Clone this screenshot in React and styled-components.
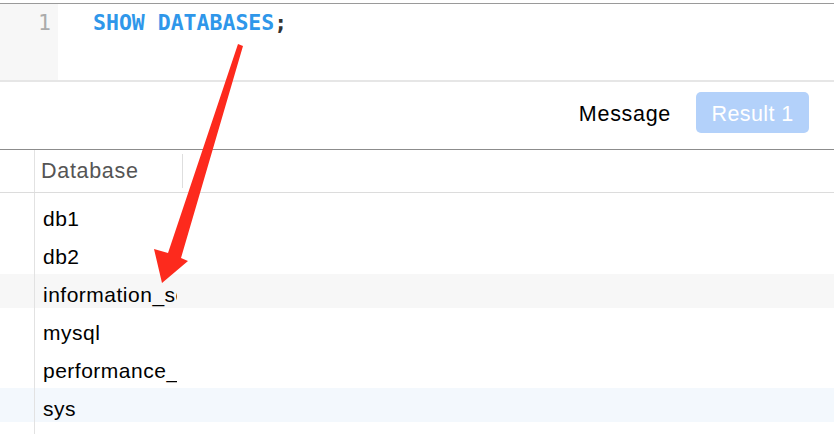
import React from "react";
import styled, { createGlobalStyle } from "styled-components";

const Global = createGlobalStyle`
  html, body { margin: 0; padding: 0; background: #fff; }
  body { font-family: "Liberation Sans", Arial, sans-serif; }
`;

const Frame = styled.div`
  position: relative;
  width: 834px;
  height: 434px;
  overflow: hidden;
  display: flex;
  flex-direction: column;
  padding-top: 3px;
  box-sizing: border-box;
  background: #fff;
`;

const Editor = styled.div`
  display: flex;
  height: 79px;
  box-sizing: border-box;
  border-top: 1px solid #9a9a9a;
  border-bottom: 2px solid #e6e6e6;
  flex-shrink: 0;
`;

const Gutter = styled.div`
  width: 58px;
  background: #f7f7f7;
  box-sizing: border-box;
  padding: 6px 7px 0 0;
  text-align: right;
  font-family: "DejaVu Sans Mono", "Liberation Mono", monospace;
  font-size: 21.5px;
  line-height: 26px;
  color: #ababab;
`;

const Code = styled.div`
  padding: 6px 0 0 35px;
  font-family: "DejaVu Sans Mono", "Liberation Mono", monospace;
  font-weight: bold;
  font-size: 21.5px;
  line-height: 26px;
  color: #333;
  white-space: pre;
`;

const Keyword = styled.span`
  color: #2f97ea;
`;

const Toolbar = styled.div`
  display: flex;
  justify-content: flex-end;
  align-items: flex-start;
  gap: 25px;
  height: 68px;
  box-sizing: border-box;
  padding: 10px 25px 0 0;
  border-bottom: 1px solid #8c8c8c;
  flex-shrink: 0;
`;

const Tab = styled.div`
  height: 41px;
  box-sizing: border-box;
  padding-top: 4px;
  line-height: 37px;
  font-size: 21.5px;
  letter-spacing: ${(p) => (p.$active ? "0.4px" : "0.7px")};
  text-align: center;
  border-radius: 5px;
  color: ${(p) => (p.$active ? "#ffffff" : "#000")};
  background: ${(p) => (p.$active ? "#b3d1fa" : "transparent")};
  width: ${(p) => (p.$active ? "113px" : "auto")};
`;

const HeaderRow = styled.div`
  display: flex;
  align-items: stretch;
  height: 43px;
  box-sizing: border-box;
  border-bottom: 1px solid #dcdcdc;
  flex-shrink: 0;
`;

const IndexCell = styled.div`
  width: 35px;
  box-sizing: border-box;
  border-right: 1px solid #e2e2e2;
  flex-shrink: 0;
`;

const HeadCell = styled.div`
  width: 147px;
  box-sizing: border-box;
  padding-left: 6px;
  line-height: 42px;
  font-size: 21.5px;
  letter-spacing: 0.7px;
  color: #555;
`;

const Resizer = styled.div`
  width: 1px;
  height: 34px;
  align-self: center;
  background: #dedede;
`;

const Body = styled.div`
  flex: 1;
  padding-top: 3px;
  background: linear-gradient(
    to right,
    transparent 34px,
    #e2e2e2 34px,
    #e2e2e2 35px,
    transparent 35px
  );
`;

const Row = styled.div`
  display: flex;
  height: 38px;
  background: ${(p) =>
    p.$stripe
      ? `linear-gradient(to bottom, transparent 2px, ${p.$stripe} 2px, ${p.$stripe} 36px, transparent 36px)`
      : "transparent"};
`;

const DataCell = styled.div`
  width: 142px;
  box-sizing: border-box;
  padding: 6px 0 0 8px;
  line-height: 34px;
  font-size: 21px;
  letter-spacing: 0.5px;
  color: #000;
  white-space: nowrap;
  overflow: hidden;
`;

const ArrowLayer = styled.svg`
  position: absolute;
  left: 0;
  top: 0;
  width: 834px;
  height: 434px;
  pointer-events: none;
`;

const rows = [
  { name: "db1" },
  { name: "db2" },
  { name: "information_schema", stripe: "#f7f7f7" },
  { name: "mysql" },
  { name: "performance_schema" },
  { name: "sys", stripe: "#f3f8fd" },
];

export default function App() {
  return (
    <>
      <Global />
      <Frame>
        <Editor>
          <Gutter>1</Gutter>
          <Code>
            <Keyword>SHOW DATABASES</Keyword>;
          </Code>
        </Editor>
        <Toolbar>
          <Tab>Message</Tab>
          <Tab $active>Result 1</Tab>
        </Toolbar>
        <HeaderRow>
          <IndexCell />
          <HeadCell>Database</HeadCell>
          <Resizer />
        </HeaderRow>
        <Body>
          {rows.map((r) => (
            <Row key={r.name} $stripe={r.stripe}>
              <IndexCell />
              <DataCell>{r.name}</DataCell>
            </Row>
          ))}
        </Body>
        <ArrowLayer viewBox="0 0 834 434">
          <polygon
            points="238,44 243,46 181,258 188,261 162,283 154,249 168,253"
            fill="#fd2a1d"
          />
        </ArrowLayer>
      </Frame>
    </>
  );
}
